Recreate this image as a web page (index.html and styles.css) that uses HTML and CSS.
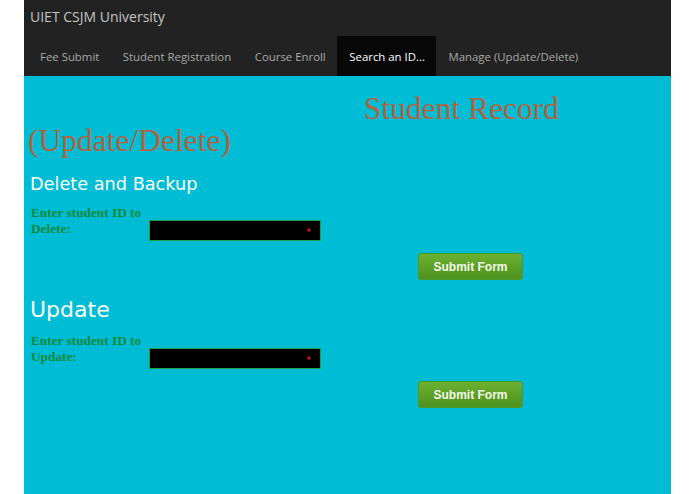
FILE: index.html
```html
<!DOCTYPE html>
<html>
<head>
<meta charset="utf-8">
<link rel="stylesheet" href="styles.css">
</head>
<body>
<div class="page">
  <header class="header">
    <div class="brand">UIET CSJM University</div>
    <nav class="nav">
      <a class="nav-item">Fee Submit</a>
      <a class="nav-item">Student Registration</a>
      <a class="nav-item">Course Enroll</a>
      <a class="nav-item active">Search an ID...</a>
      <a class="nav-item">Manage (Update/Delete)</a>
    </nav>
  </header>
  <main class="content">
    <h1 class="title">Student Record (Update/Delete)</h1>
    <h2 class="sub sub-small">Delete and Backup</h2>
    <form class="form">
      <div class="row">
        <label class="label">Enter student ID to Delete:</label>
        <input class="field" type="text">
      </div>
      <div class="actions"><button class="btn" type="button">Submit Form</button></div>
    </form>
    <h2 class="sub sub-large">Update</h2>
    <form class="form">
      <div class="row">
        <label class="label">Enter student ID to Update:</label>
        <input class="field" type="text">
      </div>
      <div class="actions"><button class="btn" type="button">Submit Form</button></div>
    </form>
  </main>
</div>
</body>
</html>
```
FILE: styles.css
```css
html, body {
  margin: 0;
  padding: 0;
  background: #ffffff;
  height: 100%;
}
.page {
  width: 647px;
  margin: 0 auto;
  height: 100%;
  display: flex;
  flex-direction: column;
}
.header {
  background: #222222;
}
.brand {
  height: 32px;
  padding: 0 0 4px 6px;
  display: flex;
  align-items: center;
  font-family: "Open Sans", "DejaVu Sans", sans-serif;
  font-size: 14px;
  color: #c4c4c4;
}
.nav {
  display: flex;
  height: 40px;
  padding-left: 4px;
}
.nav-item {
  display: flex;
  align-items: center;
  padding: 0 11.5px 0 12px;
  font-family: "Open Sans", "DejaVu Sans", sans-serif;
  font-size: 11.4px;
  color: #a8a8a8;
}
.nav-item.active {
  background: #080808;
  color: #ffffff;
}
.content {
  flex: 1;
  background: #00bcd4;
  padding: 0 4px;
}
.title {
  margin: 17px 0 0;
  text-indent: 336px;
  font-family: "Liberation Serif", "DejaVu Serif", serif;
  font-weight: normal;
  font-size: 31.5px;
  line-height: 32px;
  color: #b5623c;
}
.sub {
  margin: 0;
  font-family: "DejaVu Sans", sans-serif;
  font-weight: normal;
  color: #ffffff;
  padding-left: 2px;
}
.sub-small {
  font-size: 17.7px;
  margin-top: 15px;
  line-height: 24px;
}
.sub-large {
  font-size: 22px;
  margin-top: 16px;
  line-height: 28px;
}
.form {
  margin: 0;
}
.row {
  display: flex;
  align-items: flex-start;
  padding-left: 3px;
  margin-top: 9px;
}
.label {
  width: 118px;
  font-family: "Liberation Serif", "DejaVu Serif", serif;
  font-weight: bold;
  font-size: 13.3px;
  line-height: 16px;
  color: #0f8a3c;
}
.field {
  box-sizing: border-box;
  width: 172px;
  height: 21px;
  margin: 15px 0 0;
  border: 1px solid #1fa14a;
  background: #000000 radial-gradient(circle, #d0101a 0, #d0101a 1.3px, transparent 2px) no-repeat;
  background-size: 6px 6px;
  background-position: 156px 6px;
  outline: none;
}
.actions {
  padding-left: 390px;
  margin-top: 12px;
}
.btn {
  width: 105px;
  height: 27px;
  border: 1px solid #4f9a2a;
  border-radius: 3px;
  background: linear-gradient(#6cb132, #4e901f);
  color: #f4f9e8;
  font-family: "Liberation Sans", Arial, sans-serif;
  font-weight: bold;
  font-size: 12px;
  padding: 0;
}
```
